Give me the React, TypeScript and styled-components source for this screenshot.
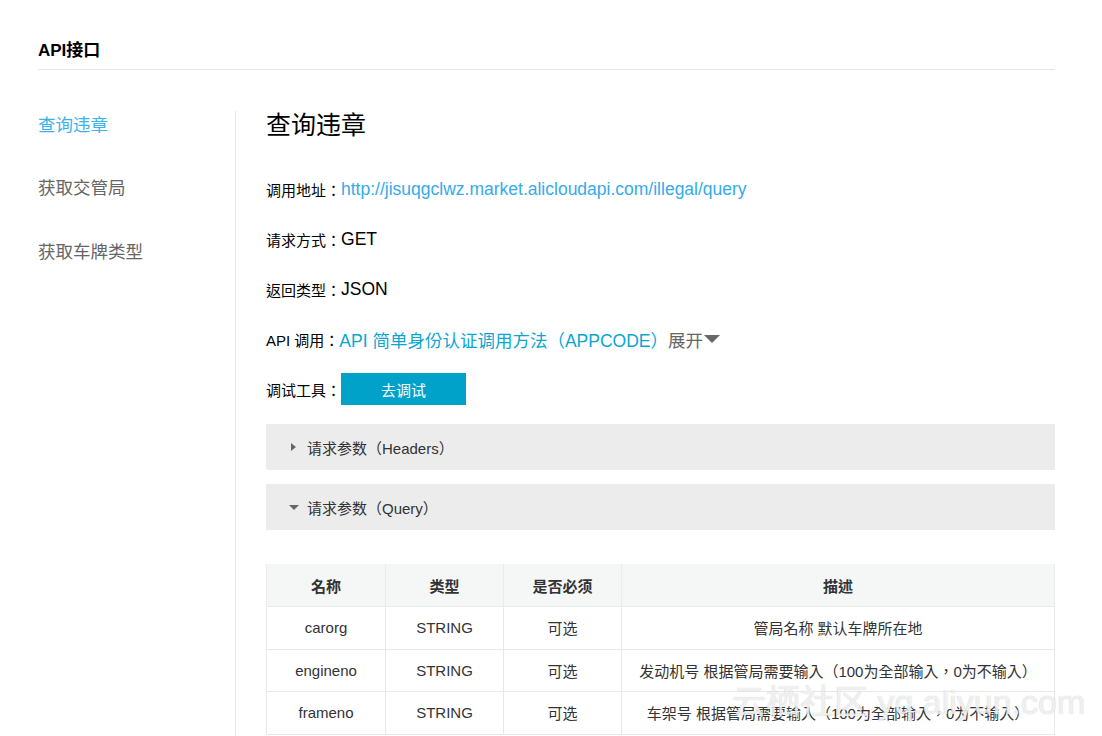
import React from 'react'
import styled, { createGlobalStyle } from 'styled-components'

const GlobalStyle = createGlobalStyle`
    body {
        margin: 0;
        background: #fff;
        font-family: "Liberation Sans", Arial, "Noto Sans CJK TC", sans-serif;
        color: #333;
    }
`

interface Param {
    name: string
    type: string
    required: string
    desc: string
}

const params: Param[] = [
    { name: 'carorg', type: 'STRING', required: '可选', desc: '管局名称 默认车牌所在地' },
    { name: 'engineno', type: 'STRING', required: '可选', desc: '发动机号 根据管局需要输入（100为全部输入，0为不输入）' },
    { name: 'frameno', type: 'STRING', required: '可选', desc: '车架号 根据管局需要输入（100为全部输入，0为不输入）' },
]

const navItems = ['查询违章', '获取交管局', '获取车牌类型']

export default function App() {
    return (
        <>
            <GlobalStyle />
            <Screen>
                <Page>
                    <Header>API接口</Header>
                    <Body>
                        <Sidebar>
                            {navItems.map((item, i) => (
                                <NavItem key={item} active={i === 0}>{item}</NavItem>
                            ))}
                        </Sidebar>
                        <Main>
                            <Title>查询违章</Title>
                            <InfoRow>
                                <Label>调用地址：</Label>
                                <LinkValue>http://jisuqgclwz.market.alicloudapi.com/illegal/query</LinkValue>
                            </InfoRow>
                            <InfoRow>
                                <Label>请求方式：</Label>
                                <Value>GET</Value>
                            </InfoRow>
                            <InfoRow>
                                <Label>返回类型：</Label>
                                <Value>JSON</Value>
                            </InfoRow>
                            <InfoRow>
                                <Label>API 调用：</Label>
                                <AuthLink>API 简单身份认证调用方法（APPCODE）</AuthLink>
                                <Expand>展开<DownArrow /></Expand>
                            </InfoRow>
                            <InfoRow>
                                <Label>调试工具：</Label>
                                <DebugButton>去调试</DebugButton>
                            </InfoRow>
                            <Panel>
                                <Caret open={false} />
                                请求参数（Headers）
                            </Panel>
                            <Panel>
                                <Caret open={true} />
                                请求参数（Query）
                            </Panel>
                            <Table>
                                <colgroup>
                                    <col style={{ width: 119 }} />
                                    <col style={{ width: 118 }} />
                                    <col style={{ width: 118 }} />
                                    <col />
                                </colgroup>
                                <thead>
                                    <tr>
                                        <Th>名称</Th>
                                        <Th>类型</Th>
                                        <Th>是否必须</Th>
                                        <Th>描述</Th>
                                    </tr>
                                </thead>
                                <tbody>
                                    {params.map(p => (
                                        <tr key={p.name}>
                                            <Td>{p.name}</Td>
                                            <Td>{p.type}</Td>
                                            <Td>{p.required}</Td>
                                            <Td>{p.desc}</Td>
                                        </tr>
                                    ))}
                                </tbody>
                            </Table>
                        </Main>
                    </Body>
                </Page>
                <Watermark>云栖社区 yq.aliyun.com</Watermark>
            </Screen>
        </>
    )
}

const Screen = styled.div`
    position: relative;
    width: 1102px;
    height: 736px;
    overflow: hidden;
`

const Page = styled.div`
    width: 1017px;
    padding-left: 38px;
`

const Header = styled.div`
    height: 70px;
    box-sizing: border-box;
    padding-top: 41px;
    font-size: 17px;
    line-height: 20px;
    font-weight: bold;
    color: #000;
    border-bottom: 1px solid #e6e6e6;
`

const Body = styled.div`
    display: flex;
    margin-top: 41px;
`

const Sidebar = styled.div`
    width: 197px;
    flex-shrink: 0;
    border-right: 1px solid #e8e8e8;
    min-height: 640px;
    padding-top: 1.5px;
`

const NavItem = styled.div<{ active: boolean }>`
    font-size: 17.5px;
    line-height: 24px;
    margin-bottom: 39.5px;
    color: ${p => (p.active ? '#3bb2ef' : '#666')};
`

const Main = styled.div`
    flex: 1;
    padding-left: 30px;
    padding-top: 1px;
`

const Title = styled.h1`
    margin: 0;
    font-size: 25px;
    line-height: 26px;
    font-weight: normal;
    color: #000;
`

const InfoRow = styled.div`
    display: flex;
    align-items: center;
    height: 32px;
    margin-top: 18px;
    &:first-of-type {
        margin-top: 35px;
    }
`

const Label = styled.span`
    font-size: 15px;
    color: #000;
`

const Value = styled.span`
    font-size: 17.5px;
    color: #000;
`

const LinkValue = styled.span`
    font-size: 17.5px;
    color: #35abeb;
`

const AuthLink = styled.span`
    font-size: 17.5px;
    color: #0aa6d2;
`

const Expand = styled.span`
    display: inline-flex;
    align-items: center;
    font-size: 17.5px;
    color: #666;
`

const DownArrow = styled.span`
    width: 0;
    height: 0;
    margin-left: 1px;
    border-left: 8px solid transparent;
    border-right: 8px solid transparent;
    border-top: 8px solid #666;
`

const DebugButton = styled.button`
    width: 125px;
    height: 32px;
    border: none;
    background: #00a2ca;
    color: #fff;
    font-size: 15px;
    font-family: inherit;
    padding: 0;
`

const Panel = styled.div`
    display: flex;
    align-items: center;
    height: 46px;
    margin-top: 14px;
    padding-left: 23px;
    background: #ececec;
    font-size: 15px;
    color: #333;
    ${InfoRow} + & {
        margin-top: 19px;
    }
`

const Caret = styled.span<{ open: boolean }>`
    width: 0;
    height: 0;
    ${p =>
        p.open
            ? `margin-right: 8px;
               border-left: 5px solid transparent;
               border-right: 5px solid transparent;
               border-top: 5px solid #666;`
            : `margin-left: 2px;
               margin-right: 11px;
               border-top: 4px solid transparent;
               border-bottom: 4px solid transparent;
               border-left: 5px solid #666;`}
`

const Table = styled.table`
    width: 789px;
    margin-top: 34px;
    border-collapse: collapse;
    table-layout: fixed;
    font-size: 15px;
    color: #333;
`

const Th = styled.th`
    height: 42px;
    padding: 0;
    background: #f5f7f7;
    border: 1px solid #ebebeb;
    border-top: none;
    font-weight: bold;
    text-align: center;
`

const Td = styled.td`
    height: 41.5px;
    padding: 0;
    border: 1px solid #e8e8e8;
    text-align: center;
`

const Watermark = styled.div`
    position: absolute;
    left: 732px;
    top: 682px;
    font-size: 34px;
    line-height: 40px;
    color: rgba(255, 255, 255, 0.75);
    text-shadow: 0 0 1px rgba(150, 150, 150, 0.6);
    pointer-events: none;
    white-space: nowrap;
`
